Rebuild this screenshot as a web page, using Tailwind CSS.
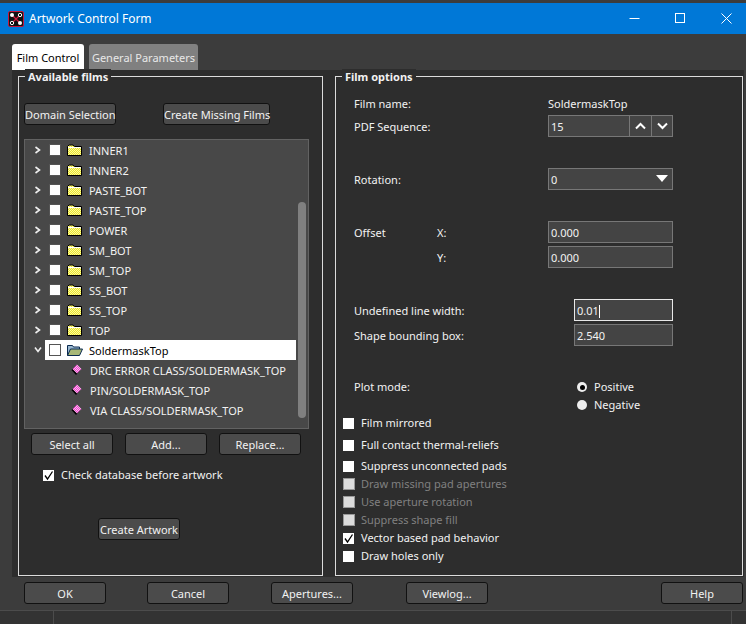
<!DOCTYPE html>
<html lang="en">
<head>
  <meta charset="UTF-8" />
  <title>Artwork Control Form</title>
  <script src="https://cdn.jsdelivr.net/npm/@tailwindcss/browser@4"></script>
</head>
<body class="bg-[#3c3c3c] font-['Noto_Sans',sans-serif] text-[11px] text-[#f2f2f2] overflow-hidden [&_span:not(:empty)]:pt-[2px] [&_button]:pt-[2px]">
  <!-- shared icons -->
  <svg class="absolute w-0 h-0">
    <defs>
      <pattern id="dither" width="2" height="2" patternUnits="userSpaceOnUse">
        <rect width="2" height="2" fill="#ffff9c"/><rect width="1" height="1" fill="#e8e030"/><rect x="1" y="1" width="1" height="1" fill="#e8e030"/>
      </pattern>
      <pattern id="pink" width="2" height="2" patternUnits="userSpaceOnUse">
        <rect width="2" height="2" fill="#ffc0f0"/><rect width="1" height="1" fill="#f040d0"/><rect x="1" y="1" width="1" height="1" fill="#f040d0"/>
      </pattern>
      <symbol id="folder" viewBox="0 0 15 12">
        <path d="M.5 11.500V2.500L2 1h4l1.500 1.500h7v9z" fill="url(#dither)" stroke="#000"/>
        <path d="M1 3.500h13" stroke="#fff"/>
      </symbol>
      <symbol id="chev" viewBox="0 0 8 8">
        <path d="M1.500 1l4 3-4 3" fill="none" stroke="#eee" stroke-width="1.600"/>
      </symbol>
      <symbol id="pin" viewBox="0 0 11 12">
        <path d="M.5 6L5 1.500 9.500 6 5 11z" fill="#000"/>
        <path d="M1.500 5L6 .5 10.500 5 6 9.500z" fill="url(#pink)"/>
      </symbol>
      <symbol id="tick" viewBox="0 0 11 11">
        <path d="M2 5.500l2.500 3.500L9.500 1.500" fill="none" stroke="#000" stroke-width="1.300"/>
      </symbol>
    </defs>
  </svg>

  <!-- Title bar -->
  <div class="mt-[3px] h-[31px] bg-[#0078d7] flex items-center text-white">
    <svg class="ml-[8px] w-[16px] h-[16px]" viewBox="0 0 16 16">
      <rect x=".5" y=".5" width="15" height="15" rx="1.500" fill="#111" stroke="#c8163c"/>
      <path d="M4 12L12 4M4 4l8 8" stroke="#d4183c" stroke-width="1.200"/>
      <circle cx="4" cy="4" r="2" fill="#fff"/><circle cx="12" cy="4" r="1.700" fill="#111" stroke="#fff"/>
      <circle cx="4" cy="12" r="1.700" fill="#111" stroke="#fff"/><circle cx="12" cy="12" r="2" fill="#fff"/>
    </svg>
    <div class="ml-[5px] text-[12px]">Artwork Control Form</div>
    <svg class="ml-auto w-[11px] h-[11px] mr-[35px]" viewBox="0 0 11 11"><path d="M.5 5.500h10" stroke="#fff"/></svg>
    <svg class="w-[11px] h-[11px] mr-[35px]" viewBox="0 0 11 11"><rect x=".5" y=".5" width="9" height="9" fill="none" stroke="#fff"/></svg>
    <svg class="w-[11px] h-[11px] mr-[14px]" viewBox="0 0 11 11"><path d="M.5 .5l10 10M10.500 .5l-10 10" stroke="#fff"/></svg>
  </div>

  <!-- Tabs -->
  <div class="h-[36px] pl-[12px] flex items-end gap-[5px]">
    <div class="w-[72px] h-[26px] pt-[2px] bg-white text-black rounded-t-[3px] flex items-center justify-center">Film Control</div>
    <div class="w-[109px] h-[26px] pt-[2px] bg-[#808080] text-[#e8e8e8] rounded-t-[3px] flex items-center justify-center">General Parameters</div>
  </div>

  <!-- Tab page -->
  <div class="ml-[12px] mr-[2px] h-[507px] bg-[#2d2d2d] pt-[6px] pl-[6px] flex">

    <!-- Available films -->
    <div class="relative w-[305px] h-[500px] border border-[#dcdcdc] flex flex-col">
      <div class="absolute -top-[8px] left-[6px] px-[3px] bg-[#2d2d2d] font-bold leading-[15px]">Available films</div>
      <div class="mt-[26px] ml-[5px] flex">
        <button class="w-[92px] h-[22px] rounded-[3px] border border-[#111] bg-[#4b4b4b] whitespace-nowrap">Domain Selection</button>
        <button class="ml-[47px] w-[107px] h-[22px] rounded-[3px] border border-[#111] bg-[#4b4b4b] whitespace-nowrap">Create Missing Films</button>
      </div>

      <!-- Film tree -->
      <div class="mt-[14px] ml-[5px] w-[285px] h-[290px] border border-[#626262] bg-[#484848] flex">
        <div class="w-[271px] flex flex-col">
          <div class="h-[20px] flex items-center"><div class="w-[20px] pl-[9px]"><svg class="w-[8px] h-[8px]"><use href="#chev"/></svg></div><span class="ml-[4px] w-[12px] h-[12px] bg-white border border-[#555]"></span><svg class="ml-[6px] w-[15px] h-[12px]"><use href="#folder"/></svg><span class="ml-[7px]">INNER1</span></div>
          <div class="h-[20px] flex items-center"><div class="w-[20px] pl-[9px]"><svg class="w-[8px] h-[8px]"><use href="#chev"/></svg></div><span class="ml-[4px] w-[12px] h-[12px] bg-white border border-[#555]"></span><svg class="ml-[6px] w-[15px] h-[12px]"><use href="#folder"/></svg><span class="ml-[7px]">INNER2</span></div>
          <div class="h-[20px] flex items-center"><div class="w-[20px] pl-[9px]"><svg class="w-[8px] h-[8px]"><use href="#chev"/></svg></div><span class="ml-[4px] w-[12px] h-[12px] bg-white border border-[#555]"></span><svg class="ml-[6px] w-[15px] h-[12px]"><use href="#folder"/></svg><span class="ml-[7px]">PASTE_BOT</span></div>
          <div class="h-[20px] flex items-center"><div class="w-[20px] pl-[9px]"><svg class="w-[8px] h-[8px]"><use href="#chev"/></svg></div><span class="ml-[4px] w-[12px] h-[12px] bg-white border border-[#555]"></span><svg class="ml-[6px] w-[15px] h-[12px]"><use href="#folder"/></svg><span class="ml-[7px]">PASTE_TOP</span></div>
          <div class="h-[20px] flex items-center"><div class="w-[20px] pl-[9px]"><svg class="w-[8px] h-[8px]"><use href="#chev"/></svg></div><span class="ml-[4px] w-[12px] h-[12px] bg-white border border-[#555]"></span><svg class="ml-[6px] w-[15px] h-[12px]"><use href="#folder"/></svg><span class="ml-[7px]">POWER</span></div>
          <div class="h-[20px] flex items-center"><div class="w-[20px] pl-[9px]"><svg class="w-[8px] h-[8px]"><use href="#chev"/></svg></div><span class="ml-[4px] w-[12px] h-[12px] bg-white border border-[#555]"></span><svg class="ml-[6px] w-[15px] h-[12px]"><use href="#folder"/></svg><span class="ml-[7px]">SM_BOT</span></div>
          <div class="h-[20px] flex items-center"><div class="w-[20px] pl-[9px]"><svg class="w-[8px] h-[8px]"><use href="#chev"/></svg></div><span class="ml-[4px] w-[12px] h-[12px] bg-white border border-[#555]"></span><svg class="ml-[6px] w-[15px] h-[12px]"><use href="#folder"/></svg><span class="ml-[7px]">SM_TOP</span></div>
          <div class="h-[20px] flex items-center"><div class="w-[20px] pl-[9px]"><svg class="w-[8px] h-[8px]"><use href="#chev"/></svg></div><span class="ml-[4px] w-[12px] h-[12px] bg-white border border-[#555]"></span><svg class="ml-[6px] w-[15px] h-[12px]"><use href="#folder"/></svg><span class="ml-[7px]">SS_BOT</span></div>
          <div class="h-[20px] flex items-center"><div class="w-[20px] pl-[9px]"><svg class="w-[8px] h-[8px]"><use href="#chev"/></svg></div><span class="ml-[4px] w-[12px] h-[12px] bg-white border border-[#555]"></span><svg class="ml-[6px] w-[15px] h-[12px]"><use href="#folder"/></svg><span class="ml-[7px]">SS_TOP</span></div>
          <div class="h-[20px] flex items-center"><div class="w-[20px] pl-[9px]"><svg class="w-[8px] h-[8px]"><use href="#chev"/></svg></div><span class="ml-[4px] w-[12px] h-[12px] bg-white border border-[#555]"></span><svg class="ml-[6px] w-[15px] h-[12px]"><use href="#folder"/></svg><span class="ml-[7px]">TOP</span></div>
          <div class="h-[20px] flex items-center">
            <div class="w-[20px] pl-[9px]"><svg class="w-[8px] h-[8px] rotate-90"><use href="#chev"/></svg></div>
            <div class="flex-1 h-[20px] bg-white text-black flex items-center">
              <span class="ml-[4px] w-[12px] h-[12px] bg-white border border-[#555]"></span>
              <svg class="ml-[6px] w-[16px] h-[12px]" viewBox="0 0 16 12"><path d="M.5 11.500V1.500h5l1 1.500h6v2" fill="#9ab8d0" stroke="#0a2a50"/><path d="M.5 11.500l3-6.500h12l-3 6.500z" fill="#a8b878" stroke="#0a2a50"/></svg>
              <span class="ml-[6px]">SoldermaskTop</span>
            </div>
          </div>
          <div class="h-[20px] flex items-center pl-[46px]"><svg class="w-[11px] h-[12px]"><use href="#pin"/></svg><span class="ml-[8px] whitespace-nowrap">DRC ERROR CLASS/SOLDERMASK_TOP</span></div>
          <div class="h-[20px] flex items-center pl-[46px]"><svg class="w-[11px] h-[12px]"><use href="#pin"/></svg><span class="ml-[8px] whitespace-nowrap">PIN/SOLDERMASK_TOP</span></div>
          <div class="h-[20px] flex items-center pl-[46px]"><svg class="w-[11px] h-[12px]"><use href="#pin"/></svg><span class="ml-[8px] whitespace-nowrap">VIA CLASS/SOLDERMASK_TOP</span></div>
        </div>
        <div class="ml-[2px] mt-[62px] w-[8px] h-[216px] rounded-[4px] bg-[#808080]"></div>
      </div>

      <div class="mt-[4px] ml-[12px] flex gap-[12px]">
        <button class="w-[82px] h-[22px] rounded-[3px] border border-[#111] bg-[#4b4b4b]">Select all</button>
        <button class="w-[82px] h-[22px] rounded-[3px] border border-[#111] bg-[#4b4b4b]">Add...</button>
        <button class="w-[82px] h-[22px] rounded-[3px] border border-[#111] bg-[#4b4b4b]">Replace...</button>
      </div>

      <div class="mt-[11px] ml-[24px] h-[18px] flex items-center">
        <svg class="w-[11px] h-[11px] bg-white"><use href="#tick"/></svg>
        <span class="ml-[7px] pt-0!">Check database before artwork</span>
      </div>

      <button class="mt-[34px] ml-[79px] w-[82px] h-[22px] rounded-[3px] border border-[#111] bg-[#4b4b4b] whitespace-nowrap">Create Artwork</button>
    </div>

    <!-- Film options -->
    <div class="relative ml-[12px] w-[408px] h-[500px] border border-[#dcdcdc] flex flex-col">
      <div class="absolute -top-[8px] left-[6px] px-[3px] bg-[#2d2d2d] font-bold leading-[15px]">Film options</div>

      <div class="mt-[16px] pl-[18px] h-[22px] flex items-center">
        <span class="w-[194px] pt-0!">Film name:</span><span class="pt-0!">SoldermaskTop</span>
      </div>
      <div class="pl-[18px] h-[22px] flex items-center">
        <span class="w-[194px]">PDF Sequence:</span>
        <div class="w-[125px] h-[22px] border border-[#777] bg-[#444] flex items-center">
          <span class="pl-[2px] w-[81px]">15</span>
          <div class="w-[22px] h-full border-l border-[#777] flex items-center justify-center"><svg class="w-[11px] h-[8px]" viewBox="0 0 11 8"><path d="M1 6.500l4.500-4.500 4.500 4.500" fill="none" stroke="#fff" stroke-width="2"/></svg></div>
          <div class="w-[21px] h-full border-l border-[#777] flex items-center justify-center"><svg class="w-[11px] h-[8px]" viewBox="0 0 11 8"><path d="M1 1.500l4.500 4.500 4.500-4.500" fill="none" stroke="#fff" stroke-width="2"/></svg></div>
        </div>
      </div>
      <div class="mt-[31px] pl-[18px] h-[22px] flex items-center">
        <span class="w-[194px]">Rotation:</span>
        <div class="w-[125px] h-[22px] border border-[#777] bg-[#444] flex items-center justify-between">
          <span class="pl-[2px]">0</span>
          <svg class="mr-[4px] w-[12px] h-[8px]" viewBox="0 0 12 8"><path d="M0 0h12L6 7z" fill="#fff"/></svg>
        </div>
      </div>
      <div class="mt-[31px] pl-[18px] h-[22px] flex items-center">
        <span class="w-[83px]">Offset</span><span class="w-[111px]">X:</span>
        <div class="w-[125px] h-[22px] pt-[2px] border border-[#777] bg-[#444] flex items-center pl-[2px]">0.000</div>
      </div>
      <div class="mt-[3px] pl-[101px] h-[22px] flex items-center">
        <span class="w-[111px]">Y:</span>
        <div class="w-[125px] h-[22px] pt-[2px] border border-[#777] bg-[#444] flex items-center pl-[2px]">0.000</div>
      </div>
      <div class="mt-[31px] pl-[18px] h-[22px] flex items-center">
        <span class="w-[220px]">Undefined line width:</span>
        <div class="w-[99px] h-[22px] pt-[2px] border border-[#e8e8e8] bg-[#444] flex items-center pl-[2px]">0.01<div class="w-px h-[13px] bg-white"></div></div>
      </div>
      <div class="mt-[3px] pl-[18px] h-[22px] flex items-center">
        <span class="w-[220px]">Shape bounding box:</span>
        <div class="w-[99px] h-[22px] pt-[2px] border border-[#777] bg-[#444] flex items-center pl-[2px]">2.540</div>
      </div>
      <div class="mt-[32px] pl-[18px] h-[18px] flex items-center">
        <span class="w-[223px] pt-0!">Plot mode:</span>
        <div class="w-[10px] h-[10px] rounded-full bg-[#eee] flex items-center justify-center"><div class="w-[5px] h-[5px] rounded-full bg-black"></div></div>
        <span class="ml-[7px] pt-0!">Positive</span>
      </div>
      <div class="pl-[241px] h-[18px] flex items-center">
        <div class="w-[10px] h-[10px] rounded-full bg-[#eee]"></div>
        <span class="ml-[7px] pt-0!">Negative</span>
      </div>

      <div class="pl-[7px] h-[18px] flex items-center"><div class="w-[11px] h-[11px] bg-white"></div><span class="ml-[7px] pt-0!">Film mirrored</span></div>
      <div class="mt-[4px] pl-[7px] h-[18px] flex items-center"><div class="w-[11px] h-[11px] bg-white"></div><span class="ml-[7px] pt-0!">Full contact thermal-reliefs</span></div>
      <div class="mt-[3px] pl-[7px] h-[18px] flex items-center"><div class="w-[11px] h-[11px] bg-white"></div><span class="ml-[7px] pt-0!">Suppress unconnected pads</span></div>
      <div class="pl-[7px] h-[18px] flex items-center text-[#808080]"><div class="w-[12px] h-[12px] bg-[#dcdcdc] border border-[#999]"></div><span class="ml-[6px] pt-0!">Draw missing pad apertures</span></div>
      <div class="pl-[7px] h-[18px] flex items-center text-[#808080]"><div class="w-[12px] h-[12px] bg-[#dcdcdc] border border-[#999]"></div><span class="ml-[6px] pt-0!">Use aperture rotation</span></div>
      <div class="pl-[7px] h-[18px] flex items-center text-[#808080]"><div class="w-[12px] h-[12px] bg-[#dcdcdc] border border-[#999]"></div><span class="ml-[6px] pt-0!">Suppress shape fill</span></div>
      <div class="pl-[7px] h-[18px] flex items-center"><svg class="w-[11px] h-[11px] bg-white"><use href="#tick"/></svg><span class="ml-[7px] pt-0!">Vector based pad behavior</span></div>
      <div class="pl-[7px] h-[18px] flex items-center"><div class="w-[11px] h-[11px] bg-white"></div><span class="ml-[7px] pt-0!">Draw holes only</span></div>
    </div>
  </div>

  <!-- Dialog buttons -->
  <div class="mt-[5px] pl-[24px] flex">
    <button class="w-[82px] h-[22px] rounded-[3px] border border-[#111] bg-[#4b4b4b]">OK</button>
    <button class="ml-[41px] w-[82px] h-[22px] rounded-[3px] border border-[#111] bg-[#4b4b4b]">Cancel</button>
    <button class="ml-[42px] w-[82px] h-[22px] rounded-[3px] border border-[#111] bg-[#4b4b4b]">Apertures...</button>
    <button class="ml-[53px] w-[82px] h-[22px] rounded-[3px] border border-[#111] bg-[#4b4b4b]">Viewlog...</button>
    <button class="ml-[173px] w-[82px] h-[22px] rounded-[3px] border border-[#111] bg-[#4b4b4b]">Help</button>
  </div>

  <!-- Status bar -->
  <div class="mt-[6px] h-[14px] border-t border-[#4c4c4c] bg-[#333] flex">
    <div class="w-[54px] border-r border-[#4c4c4c]"></div>
    <div class="ml-[677px] border-l border-[#4c4c4c]"></div>
  </div>
</body>
</html>
